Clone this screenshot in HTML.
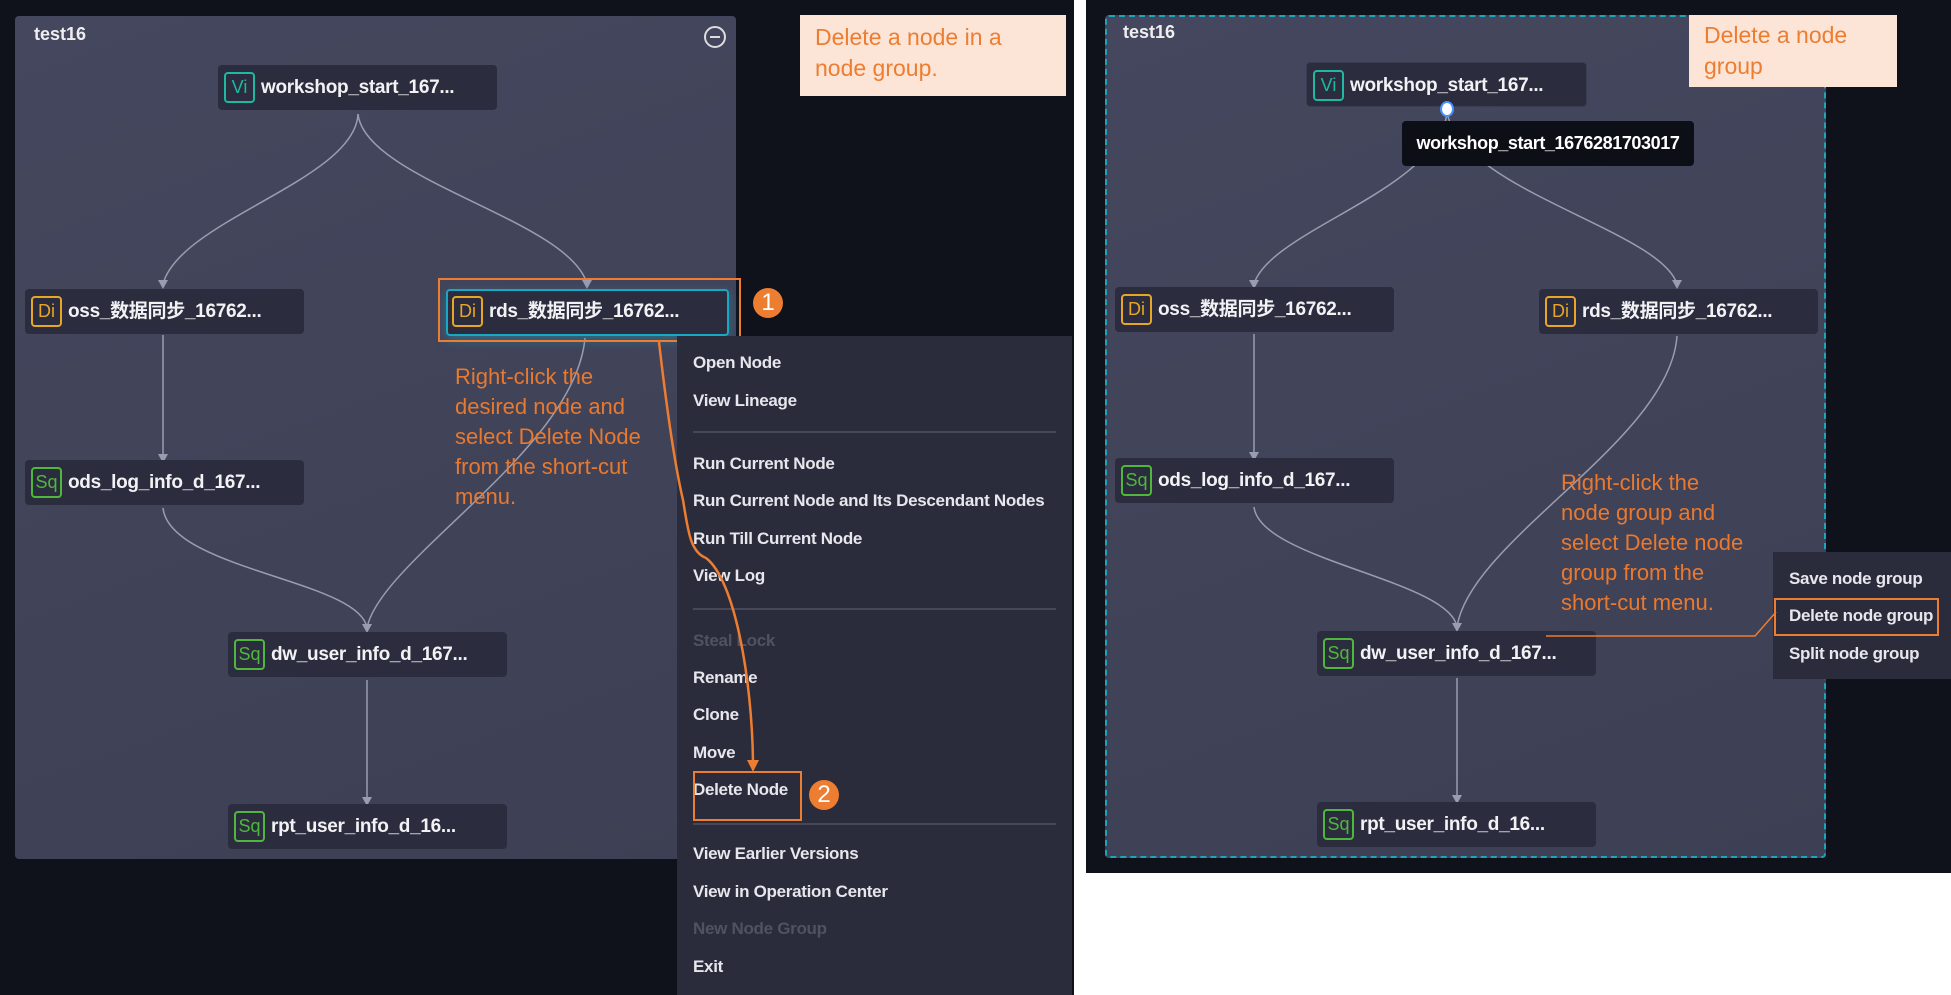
<!DOCTYPE html>
<html><head><meta charset="utf-8"><style>
*{margin:0;padding:0;box-sizing:border-box}
body{width:1951px;height:995px;background:#fff;position:relative;overflow:hidden;font-family:"Liberation Sans","Noto Sans CJK SC",sans-serif}
.abs{position:absolute}
.dark{background:#0f121b}
.grp{background:linear-gradient(160deg,#45475e,#3d3f54);border-radius:4px}
.node{position:absolute;width:279px;height:45px;background:#2b2d3e;border-radius:4px;color:#f2f2f5;font-size:19px;font-weight:bold;line-height:45px;padding-left:43px;white-space:nowrap;letter-spacing:-0.3px}
.ic{position:absolute;left:6px;top:7px;width:31px;height:31px;border:2.5px solid;border-radius:4px;font-size:18px;font-weight:normal;line-height:26px;text-align:center;letter-spacing:0}
.vi{border-color:#1fb8a2;color:#1fb8a2}.di{border-color:#e8a526;color:#e8a526}.sq{border-color:#4fb83c;color:#4fb83c}
.menu{background:#2a2c3b;color:#e6e6ec;font-size:17px;font-weight:bold;letter-spacing:-0.3px}
.mi{position:absolute;left:16px;white-space:nowrap;line-height:20px}
.dis{color:#4f5263}
.sep{position:absolute;left:16px;right:16px;height:2px;background:#464859}
.note{color:#e8792f;font-size:22px;line-height:30px;font-weight:300}
.call{background:#fce4d6;color:#ed7d31;font-size:23px;line-height:31px;padding:7px 15px}
.circ{position:absolute;width:30px;height:30px;border-radius:50%;background:#ed7d31;color:#fff;font-size:24px;text-align:center;line-height:30px}
.t16{color:#eee;font-size:18px;font-weight:bold}
</style></head><body>
<div class="abs dark" style="left:0;top:0;width:1074px;height:995px"></div>
<div class="abs dark" style="left:1086px;top:0;width:865px;height:873px"></div>
<div class="abs grp" style="left:15px;top:16px;width:721px;height:843px"></div>
<div class="abs grp" style="left:1105px;top:15px;width:721px;height:843px;border:2px dashed #1aa5b8"></div>
<div class="abs t16" style="left:34px;top:24px">test16</div>
<div class="abs t16" style="left:1123px;top:22px">test16</div>
<svg class="abs" style="left:703px;top:25px" width="24" height="24"><circle cx="12" cy="12" r="10" fill="none" stroke="#ddd" stroke-width="2"/><line x1="7" y1="12" x2="17" y2="12" stroke="#ddd" stroke-width="2"/></svg>

<svg class="abs" style="left:0;top:0" width="1951" height="995">
<g fill="none" stroke="#9a9db0" stroke-width="1.5">
<path d="M358 114 C355 180 180 220 163 284"/>
<path d="M358 114 C365 180 570 220 587 284"/>
<path d="M163 335 L163 458"/>
<path d="M163 508 C170 570 360 580 367 628"/>
<path d="M585 338 C575 450 380 560 367 628"/>
<path d="M367 680 L367 801"/>
<path d="M1447 112 C1440 190 1270 230 1254 284"/>
<path d="M1447 112 C1460 190 1660 230 1677 284"/>
<path d="M1254 334 L1254 456"/>
<path d="M1254 507 C1260 560 1450 580 1457 627"/>
<path d="M1677 336 C1670 440 1470 540 1457 627"/>
<path d="M1457 678 L1457 799"/>
</g>
<g fill="#9a9db0">
<path d="M158 280 L168 280 L163 289Z"/><path d="M582 280 L592 280 L587 289Z"/><path d="M158 454 L168 454 L163 463Z"/>
<path d="M362 624 L372 624 L367 633Z"/><path d="M362 797 L372 797 L367 806Z"/>
<path d="M1249 280 L1259 280 L1254 289Z"/><path d="M1672 280 L1682 280 L1677 289Z"/><path d="M1249 452 L1259 452 L1254 461Z"/>
<path d="M1452 623 L1462 623 L1457 632Z"/><path d="M1452 795 L1462 795 L1457 804Z"/>
</g>
</svg>

<div class="node" style="left:218px;top:65px"><span class="ic vi">Vi</span>workshop_start_167...</div>
<div class="node" style="left:25px;top:289px"><span class="ic di">Di</span>oss_数据同步_16762...</div>
<div class="node" style="left:446px;top:289px;width:283px;height:47px;border:2.5px solid #17a8c4;box-shadow:0 4px 12px rgba(23,168,196,.4);line-height:42px;padding-left:41px"><span class="ic di" style="left:4px;top:5px">Di</span>rds_数据同步_16762...</div>
<div class="node" style="left:25px;top:460px"><span class="ic sq">Sq</span>ods_log_info_d_167...</div>
<div class="node" style="left:228px;top:632px"><span class="ic sq">Sq</span>dw_user_info_d_167...</div>
<div class="node" style="left:228px;top:804px"><span class="ic sq">Sq</span>rpt_user_info_d_16...</div>

<div class="node" style="left:1306px;top:62px;width:281px;border:1px solid #3b3e52"><span class="ic vi">Vi</span>workshop_start_167...</div>
<div class="node" style="left:1115px;top:287px"><span class="ic di">Di</span>oss_数据同步_16762...</div>
<div class="node" style="left:1539px;top:289px"><span class="ic di">Di</span>rds_数据同步_16762...</div>
<div class="node" style="left:1115px;top:458px"><span class="ic sq">Sq</span>ods_log_info_d_167...</div>
<div class="node" style="left:1317px;top:631px"><span class="ic sq">Sq</span>dw_user_info_d_167...</div>
<div class="node" style="left:1317px;top:802px"><span class="ic sq">Sq</span>rpt_user_info_d_16...</div>
<div class="abs" style="left:1440px;top:101px;width:14px;height:16px;border-radius:50%;background:#fff;border:2px solid #4a90ff"></div>
<div class="abs" style="left:1402px;top:121px;width:292px;height:45px;background:#0d0f17;border-radius:4px;color:#fff;font-size:18px;font-weight:bold;line-height:45px;text-align:center;letter-spacing:-0.4px">workshop_start_1676281703017</div>

<div class="abs" style="left:438px;top:278px;width:303px;height:64px;border:2px solid #ed7d31"></div>
<div class="circ" style="left:753px;top:288px">1</div>

<div class="abs menu" style="left:677px;top:336px;width:395px;height:659px">
<div class="mi" style="top:17px">Open Node</div>
<div class="mi" style="top:55px">View Lineage</div>
<div class="sep" style="top:95px"></div>
<div class="mi" style="top:118px">Run Current Node</div>
<div class="mi" style="top:155px">Run Current Node and Its Descendant Nodes</div>
<div class="mi" style="top:193px">Run Till Current Node</div>
<div class="mi" style="top:230px">View Log</div>
<div class="sep" style="top:272px"></div>
<div class="mi dis" style="top:295px">Steal Lock</div>
<div class="mi" style="top:332px">Rename</div>
<div class="mi" style="top:369px">Clone</div>
<div class="mi" style="top:407px">Move</div>
<div class="mi" style="top:444px">Delete Node</div>
<div class="sep" style="top:487px"></div>
<div class="mi" style="top:508px">View Earlier Versions</div>
<div class="mi" style="top:546px">View in Operation Center</div>
<div class="mi dis" style="top:583px">New Node Group</div>
<div class="mi" style="top:621px">Exit</div>
</div>
<div class="abs" style="left:693px;top:771px;width:109px;height:50px;border:2px solid #ed7d31"></div>
<div class="circ" style="left:809px;top:780px">2</div>

<div class="abs menu" style="left:1773px;top:552px;width:178px;height:127px">
<div class="mi" style="top:17px">Save node group</div>
<div class="mi" style="top:54px">Delete node group</div>
<div class="mi" style="top:92px">Split node group</div>
</div>
<div class="abs" style="left:1774px;top:598px;width:165px;height:38px;border:2px solid #ed7d31"></div>

<svg class="abs" style="left:0;top:0" width="1951" height="995">
<path d="M659 342 C668 420 676 470 683 500 C688 530 690 552 706 558 C735 580 752 680 753 762" fill="none" stroke="#ed7d31" stroke-width="2.5"/>
<path d="M747 760 L759 760 L753 772Z" fill="#ed7d31"/>
<path d="M1546 636 L1755 636 L1776 612" fill="none" stroke="#ed7d31" stroke-width="1.5"/>
</svg>

<div class="abs note" style="left:455px;top:362px">Right-click the<br>desired node and<br>select Delete Node<br>from the short-cut<br>menu.</div>
<div class="abs note" style="left:1561px;top:468px">Right-click the<br>node group and<br>select Delete node<br>group from the<br>short-cut menu.</div>

<div class="abs call" style="left:800px;top:15px;width:266px;height:81px">Delete a node in a<br>node group.</div>
<div class="abs call" style="left:1689px;top:15px;width:208px;height:72px;padding-top:5px">Delete a node<br>group</div>
</body></html>
